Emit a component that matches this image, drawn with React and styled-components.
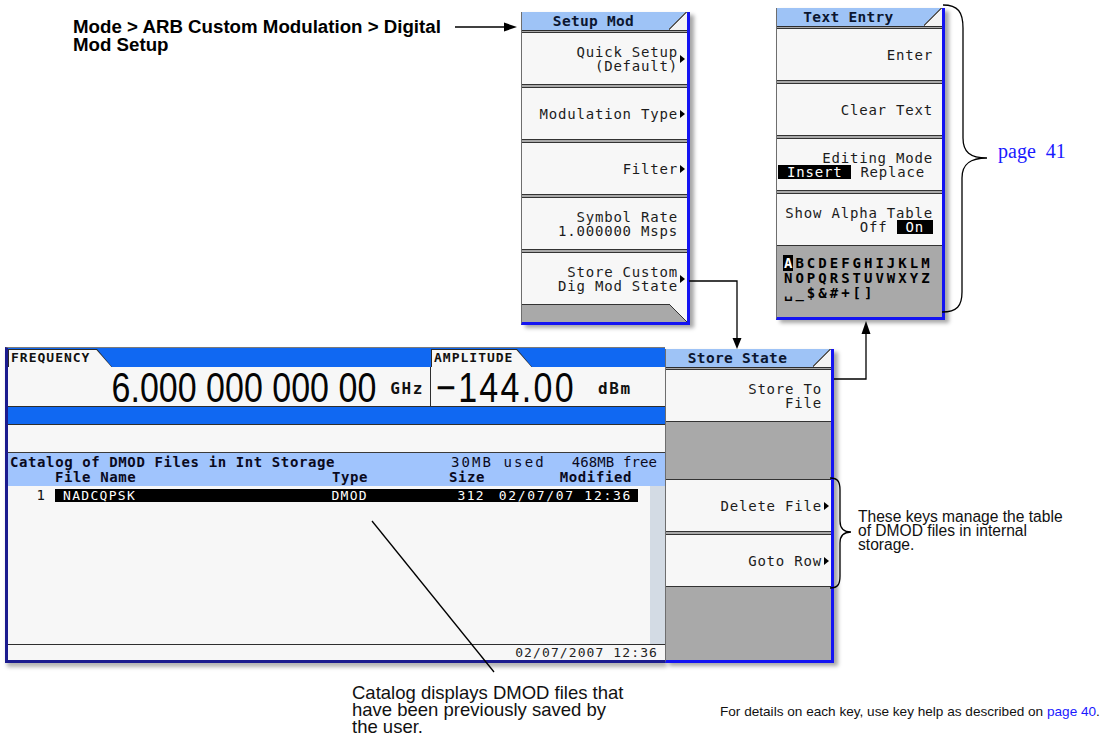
import React from 'react';
import styled, { createGlobalStyle, css } from 'styled-components';

const mono = `"DejaVu Sans Mono", "Liberation Mono", monospace`;

const GlobalStyle = createGlobalStyle`
  html, body {
    margin: 0;
    padding: 0;
    background: #ffffff;
  }
  #root {
    width: 1113px;
    height: 740px;
  }
`;

const Figure = styled.div`
  position: relative;
  width: 1113px;
  height: 740px;
  overflow: hidden;
  background: #ffffff;
  font-family: "Liberation Sans", Arial, sans-serif;
  color: #111;
`;

/* ---------- annotations ---------- */

const Breadcrumb = styled.div`
  position: absolute;
  left: 73px;
  top: 18px;
  font-weight: bold;
  font-size: 18.7px;
  line-height: 18px;
  color: #000;
`;

const PageRef = styled.div`
  position: absolute;
  left: 998px;
  top: 141px;
  font-family: "Liberation Serif", "Times New Roman", serif;
  font-size: 20px;
  line-height: 20px;
  color: #1a1aff;
  white-space: pre;
`;

const SideNote = styled.div`
  position: absolute;
  left: 858px;
  top: 510px;
  font-size: 15.6px;
  line-height: 14px;
  color: #111;
`;

const Caption = styled.div`
  position: absolute;
  left: 352px;
  top: 684px;
  font-size: 18.5px;
  line-height: 17px;
  color: #111;
`;

const HelpLine = styled.div`
  position: absolute;
  left: 720px;
  top: 704px;
  font-size: 13.6px;
  line-height: 16px;
  color: #111;
  white-space: nowrap;
`;

const Link = styled.span`
  color: #1a1aff;
`;

const Wires = styled.svg`
  position: absolute;
  left: 0;
  top: 0;
  width: 1113px;
  height: 740px;
  pointer-events: none;
  z-index: 3;
`;

/* ---------- softkey menus ---------- */

const MenuSpot = styled.div`
  position: absolute;
  left: ${p => p.$x}px;
  top: ${p => p.$y}px;
`;

const SoftPanel = styled.div`
  box-sizing: border-box;
  width: 169px;
  height: ${p => p.$h}px;
  display: flex;
  flex-direction: column;
  background: #a9a9a9;
  border-left: 1px solid #6e6e6e;
  border-right: 3px solid #1414f2;
  border-bottom: 3px solid #1414f2;
  box-shadow: 4px 3px 4px rgba(0, 0, 0, 0.35);
`;

const PanelTitle = styled.div`
  position: relative;
  flex: none;
  height: 18px;
  border-bottom: 1px solid #2d2d2d;
  background: #9ec3f6;
  padding-right: 22px;
  text-align: center;
  font: bold 14.5px/18px ${mono};
  letter-spacing: 0.3px;
  color: #0b1630;
  &::after {
    content: '';
    position: absolute;
    right: 0;
    top: 0;
    bottom: 0;
    width: 18px;
    background: linear-gradient(
      to bottom right,
      transparent calc(50% - 1px),
      #5a5a5a calc(50% - 1px),
      #5a5a5a calc(50% + 0.6px),
      #f3f3f3 calc(50% + 0.6px)
    );
  }
`;

const KeyStack = styled.div`
  flex: none;
  display: flex;
  flex-direction: column;
  gap: 2px;
  padding-top: 1px;
`;

const SoftKey = styled.div`
  position: relative;
  box-sizing: border-box;
  height: 53px;
  padding-right: 9px;
  display: flex;
  flex-direction: column;
  justify-content: center;
  align-items: flex-end;
  background: #f7f7f7;
  border-top: 1px solid #333;
  border-bottom: 1px solid #333;
  font: 14px/12px ${mono};
  letter-spacing: 0.8px;
  color: #1c1c1c;
  white-space: pre;
`;

const BlankKey = styled.div`
  height: 53px;
`;

const SubArrow = styled.span`
  position: absolute;
  right: 2px;
  top: 50%;
  margin-top: -4px;
  width: 0;
  height: 0;
  border-left: 5px solid #000;
  border-top: 4px solid transparent;
  border-bottom: 4px solid transparent;
`;

const KeyLine = styled.div`
  display: flex;
  align-items: center;
  gap: ${p => p.$gap || 0}px;
  margin-right: ${p => p.$mr || 0}px;
  line-height: 14px;
`;

const Highlight = styled.span`
  display: inline-block;
  background: #000;
  color: #fff;
  padding: 0 ${p => p.$pad || 4}px;
  line-height: 14px;
`;

const PanelFoot = styled.div`
  position: relative;
  flex: 1;
  ${p => p.$notch && css`
    &::before {
      content: '';
      position: absolute;
      right: 0;
      top: -1px;
      width: 18px;
      height: calc(100% + 1px);
      background: linear-gradient(
        to bottom left,
        #f7f7f7 calc(50% - 0.7px),
        #333 calc(50% - 0.7px),
        #333 calc(50% + 0.7px),
        transparent calc(50% + 0.7px)
      );
    }
  `}
`;

const AlphaPad = styled.div`
  flex: 1;
  padding: 10px 0 0 7px;
  font: bold 14px/15px ${mono};
  letter-spacing: 3px;
  color: #000;
`;

const AlphaRow = styled.div`
  white-space: pre;
`;

const AlphaCursor = styled.span`
  background: #000;
  color: #fff;
  letter-spacing: 0;
  padding: 0 1px;
  margin: 0 2px 0 -1px;
`;

/* ---------- instrument screen ---------- */

const ScreenSpot = styled.div`
  position: absolute;
  left: 5px;
  top: 347px;
  display: flex;
  align-items: flex-start;
`;

const Display = styled.div`
  box-sizing: border-box;
  width: 660px;
  height: 316px;
  display: flex;
  flex-direction: column;
  border-left: 3px solid #1b1b8e;
  border-top: 1px solid #7a7a7a;
  border-bottom: 3px solid #1b1b8e;
  background: #f7f7f7;
  box-shadow: 2px 4px 4px rgba(0, 0, 0, 0.3);
`;

const StoreSpot = styled.div`
  margin-top: 2px;
`;

const ReadoutRow = styled.div`
  flex: none;
  display: flex;
  height: 58px;
`;

const Readout = styled.div`
  display: flex;
  flex-direction: column;
  width: ${p => (p.$w ? `${p.$w}px` : 'auto')};
  flex: ${p => (p.$w ? 'none' : 1)};
`;

const TabStrip = styled.div`
  flex: none;
  height: 19px;
  display: flex;
  align-items: flex-end;
  background: #1068f2;
`;

const Tab = styled.div`
  box-sizing: border-box;
  width: ${p => p.$w}px;
  height: 18px;
  padding: 1px 0 0 1px;
  background: #2a2a2a;
  clip-path: polygon(0 0, calc(100% - 15px) 0, 100% 100%, 0 100%);
`;

const TabFace = styled.div`
  height: 100%;
  padding-left: 2px;
  background: #f7f7f7;
  clip-path: polygon(0 0, calc(100% - 15.5px) 0, calc(100% - 0.5px) 100%, 0 100%);
  font: bold 13px/16px ${mono};
  letter-spacing: 1px;
  color: #111;
`;

const ValueRow = styled.div`
  flex: 1;
  display: flex;
  align-items: center;
  justify-content: ${p => (p.$end ? 'flex-end' : 'flex-start')};
  padding: ${p => (p.$end ? '0 6px 0 0' : '0 0 0 5px')};
  border-right: ${p => (p.$divider ? '1px solid #2e2e2e' : 'none')};
  background: #f7f7f7;
`;

const BigValue = styled.span`
  display: inline-block;
  font-family: "Liberation Sans", Arial, sans-serif;
  font-size: 34px;
  line-height: 34px;
  letter-spacing: ${p => p.$ls || 0}px;
  transform: scaleY(1.24);
  color: #050505;
  white-space: pre;
`;

const Unit = styled.span`
  margin: 5px ${p => p.$mr || 0}px 0 ${p => p.$ml || 0}px;
  font: bold 16px/14px ${mono};
  letter-spacing: 1.6px;
  color: #111;
`;

const BlueBar = styled.div`
  flex: none;
  height: 17px;
  border-top: 1px solid #2e2e2e;
  background: #1068f2;
`;

const EmptyLine = styled.div`
  flex: none;
  height: 27px;
  border-top: 1px solid #2e2e2e;
  background: #f7f7f7;
`;

const CatalogHead = styled.div`
  flex: none;
  box-sizing: border-box;
  height: 34px;
  padding-top: 2px;
  border-top: 1px solid #3a3a3a;
  background: #a0c4fd;
  font-family: ${mono};
  color: #0a0a1e;
`;

const HeadLine = styled.div`
  display: flex;
  height: 15px;
  line-height: 15px;
  padding: 0 8px 0 2px;
  white-space: pre;
`;

const HeadTitle = styled.span`
  font-weight: bold;
  font-size: 14px;
  letter-spacing: 0.6px;
`;

const HeadStat = styled.span`
  margin-left: ${p => (p.$ml ? `${p.$ml}px` : 'auto')};
  font-size: 14px;
  letter-spacing: ${p => p.$ls || 0}px;
`;

const Columns = styled.div`
  display: grid;
  grid-template-columns: 200px 113px 117px 147px;
  align-items: center;
  margin-left: ${p => p.$ml}px;
  width: 583px;
  height: ${p => p.$h}px;
  box-sizing: border-box;
  background: ${p => (p.$selected ? '#000' : 'transparent')};
  color: ${p => (p.$selected ? '#fff' : 'inherit')};
  font-size: ${p => (p.$bold ? 14 : 13)}px;
  font-weight: ${p => (p.$bold ? 'bold' : 'normal')};
  letter-spacing: ${p => (p.$bold ? 0.6 : 1.3)}px;
  line-height: ${p => p.$h}px;
`;

const Cell = styled.span`
  text-align: ${p => (p.$right ? 'right' : 'left')};
  padding-left: ${p => p.$pl || 0}px;
  letter-spacing: ${p => (p.$ls ? `${p.$ls}px` : 'inherit')};
  white-space: pre;
`;

const ListArea = styled.div`
  flex: 1;
  display: flex;
  background: #f7f7f7;
`;

const ListBody = styled.div`
  flex: 1;
  padding-top: 2px;
  font-family: ${mono};
  color: #111;
`;

const ListRow = styled.div`
  display: flex;
  align-items: center;
`;

const RowIndex = styled.span`
  width: 37px;
  text-align: right;
  font-size: 14px;
  line-height: 14px;
`;

const ScrollTrack = styled.div`
  width: 15px;
  background: #d3dbe4;
`;

const StatusBar = styled.div`
  flex: none;
  height: 15px;
  border-top: 1px solid #2e2e2e;
  padding-right: 7px;
  text-align: right;
  font: 13px/15px ${mono};
  letter-spacing: 1.1px;
  color: #222;
  background: #f7f7f7;
`;

/* ---------- pieces ---------- */

function Key({ lines, sub }) {
  return (
    <SoftKey>
      {lines.map(l => (
        <KeyLine key={l}>{l}</KeyLine>
      ))}
      {sub && <SubArrow />}
    </SoftKey>
  );
}

function SetupModMenu() {
  return (
    <SoftPanel $h={313}>
      <PanelTitle>Setup Mod</PanelTitle>
      <KeyStack>
        <Key lines={['Quick Setup', '(Default)']} sub />
        <Key lines={['Modulation Type']} sub />
        <Key lines={['Filter']} sub />
        <Key lines={['Symbol Rate', '1.000000 Msps']} />
        <Key lines={['Store Custom', 'Dig Mod State']} sub />
      </KeyStack>
      <PanelFoot $notch />
    </SoftPanel>
  );
}

function TextEntryMenu() {
  return (
    <SoftPanel $h={312}>
      <PanelTitle>Text Entry</PanelTitle>
      <KeyStack>
        <Key lines={['Enter']} />
        <Key lines={['Clear Text']} />
        <SoftKey>
          <KeyLine>Editing Mode</KeyLine>
          <KeyLine $gap={9} $mr={8}>
            <Highlight $pad={9}>Insert</Highlight>
            <span>Replace</span>
          </KeyLine>
        </SoftKey>
        <SoftKey>
          <KeyLine>Show Alpha Table</KeyLine>
          <KeyLine $gap={9}>
            <span>Off</span>
            <Highlight $pad={9}>On</Highlight>
          </KeyLine>
        </SoftKey>
      </KeyStack>
      <AlphaPad>
        <AlphaRow><AlphaCursor>A</AlphaCursor>BCDEFGHIJKLM</AlphaRow>
        <AlphaRow>NOPQRSTUVWXYZ</AlphaRow>
        <AlphaRow>{'␣_$&#+[]'}</AlphaRow>
      </AlphaPad>
    </SoftPanel>
  );
}

function StoreStateMenu() {
  return (
    <SoftPanel $h={314}>
      <PanelTitle>Store State</PanelTitle>
      <KeyStack>
        <Key lines={['Store To', 'File']} />
        <BlankKey />
        <Key lines={['Delete File']} sub />
        <Key lines={['Goto Row']} sub />
      </KeyStack>
      <PanelFoot />
    </SoftPanel>
  );
}

function Screen() {
  return (
    <ScreenSpot>
      <Display>
        <ReadoutRow>
          <Readout $w={423}>
            <TabStrip>
              <Tab $w={104}>
                <TabFace>FREQUENCY</TabFace>
              </Tab>
            </TabStrip>
            <ValueRow $end $divider>
              <BigValue>6.000 000 000 00</BigValue>
              <Unit $ml={14}>GHz</Unit>
            </ValueRow>
          </Readout>
          <Readout>
            <TabStrip>
              <Tab $w={101}>
                <TabFace>AMPLITUDE</TabFace>
              </Tab>
            </TabStrip>
            <ValueRow>
              <BigValue $ls={2.3}>−144.00</BigValue>
              <Unit $ml={22}>dBm</Unit>
            </ValueRow>
          </Readout>
        </ReadoutRow>
        <BlueBar />
        <EmptyLine />
        <CatalogHead>
          <HeadLine>
            <HeadTitle>Catalog of DMOD Files in Int Storage</HeadTitle>
            <HeadStat $ls={2.1}>30MB used</HeadStat>
            <HeadStat $ml={26} $ls={0.1}>468MB free</HeadStat>
          </HeadLine>
          <Columns $h={15} $ml={47} $bold>
            <Cell>File Name</Cell>
            <Cell $right>Type</Cell>
            <Cell $right>Size</Cell>
            <Cell $right>Modified</Cell>
          </Columns>
        </CatalogHead>
        <ListArea>
          <ListBody>
            <ListRow>
              <RowIndex>1</RowIndex>
              <Columns $h={13} $ml={10} $selected>
                <Cell $pl={8}>NADCQPSK</Cell>
                <Cell $right>DMOD</Cell>
                <Cell $right>312</Cell>
                <Cell $right $ls={1.7}>02/07/07 12:36</Cell>
              </Columns>
            </ListRow>
          </ListBody>
          <ScrollTrack />
        </ListArea>
        <StatusBar>02/07/2007 12:36</StatusBar>
      </Display>
      <StoreSpot>
        <StoreStateMenu />
      </StoreSpot>
    </ScreenSpot>
  );
}

export default function App() {
  return (
    <Figure>
      <GlobalStyle />
      <Breadcrumb>
        Mode &gt; ARB Custom Modulation &gt; Digital
        <br />
        Mod Setup
      </Breadcrumb>

      <MenuSpot $x={521} $y={12}>
        <SetupModMenu />
      </MenuSpot>

      <MenuSpot $x={776} $y={8}>
        <TextEntryMenu />
      </MenuSpot>

      <PageRef>page  41</PageRef>

      <Screen />

      <SideNote>
        These keys manage the table
        <br />
        of DMOD files in internal
        <br />
        storage.
      </SideNote>

      <Caption>
        Catalog displays DMOD files that
        <br />
        have been previously saved by
        <br />
        the user.
      </Caption>

      <HelpLine>
        For details on each key, use key help as described on <Link>page 40</Link>.
      </HelpLine>

      <Wires viewBox="0 0 1113 740">
        <g stroke="#000" strokeWidth="1.3" fill="none">
          <line x1="455" y1="27" x2="506" y2="27" />
          <polyline points="689,281 737,281 737,339" />
          <polyline points="834,379 866,379 866,333" />
          <line x1="372" y1="521" x2="494" y2="672" />
          <path d="M943 5 C958 5 963 12 963 28 L963 138 C963 152 970 158 987 158 C970 158 962 164 962 178 L962 292 C962 306 957 312 942 312" />
          <path d="M830 478 C838 478 840 482 840 490 L840 521 C840 528 844 532 851 532 C844 532 840 536 840 543 L840 576 C840 584 838 588 830 588" />
        </g>
        <g fill="#000">
          <polygon points="504,22.5 517,27 504,31.5" />
          <polygon points="732.5,338 737,349 741.5,338" />
          <polygon points="861.5,334 866,321 870.5,334" />
        </g>
      </Wires>
    </Figure>
  );
}
